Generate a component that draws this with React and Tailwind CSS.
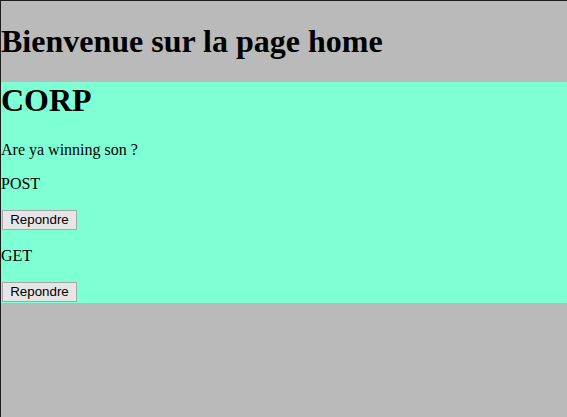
export default function App() {
  return (
    <div className="min-h-screen bg-[#bababa] border-t border-l border-[#1e1e1e] font-['Liberation_Serif',serif] text-black">
      <h1 className="mt-[21.5px] mb-[22.5px] text-[32px] font-bold leading-[37px]">
        Bienvenue sur la page home
      </h1>

      <div className="bg-[#7fffd4]">
        <h1 className="mb-[22px] text-[32px] font-bold leading-[37px]">CORP</h1>
        <p className="mb-4 text-base leading-[18.4px]">Are ya winning son ?</p>
        <p className="mb-4 text-base leading-[18.4px]">POST</p>
        <p className="mb-4 flex h-[21.5px] items-start">
          <ReplyButton />
        </p>
        <p className="mb-4 text-base leading-[18.4px]">GET</p>
        <p className="flex h-[21.5px] items-start">
          <ReplyButton />
        </p>
      </div>
    </div>
  );
}

function ReplyButton() {
  return (
    <button className="ml-px h-[20px] w-[75px] border border-[#a6a6a6] bg-[#e6e6e6] font-['Liberation_Sans',sans-serif] text-[13.33px] leading-[18px] text-black">
      Repondre
    </button>
  );
}
